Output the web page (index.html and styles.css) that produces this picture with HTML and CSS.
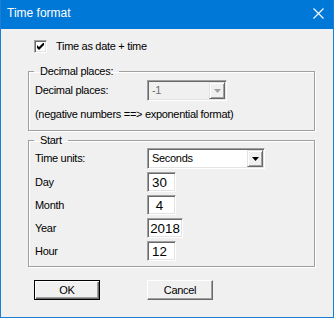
FILE: index.html
```html
<!DOCTYPE html>
<html lang="en">
<head>
    <meta charset="UTF-8">
    <title>Time format</title>
    <link rel="stylesheet" href="styles.css">
</head>
<body>

    <div class="window">
        <div class="titlebar">
            <span class="title">Time format</span>
            <svg class="close" width="11" height="11" viewBox="0 0 11 11">
                <path d="M0.5 0.5 L10.5 10.5 M10.5 0.5 L0.5 10.5" stroke="#fff" stroke-width="1.1" fill="none"/>
            </svg>
        </div>

        <div class="content">
            <label class="check-row">
                <span class="checkbox">
                    <svg width="7" height="7" viewBox="0 0 7 7">
                        <path d="M0 2 L2 4 L6 0 L7 0 L7 2 L2 7 L0 5 Z" fill="#000"/>
                    </svg>
                </span>
                Time as date + time
            </label>

            <fieldset class="group decimals">
                <legend>Decimal places:</legend>
                <div class="row">
                    <span class="label">Decimal places:</span>
                    <div class="combo combo-small disabled">
                        <span class="combo-text">-1</span>
                        <span class="drop">
                            <svg width="7" height="4" viewBox="0 0 7 4"><path d="M0 0 H7 L3.5 4 Z"/></svg>
                        </span>
                    </div>
                </div>
                <div class="note">(negative numbers ==&gt; exponential format)</div>
            </fieldset>

            <fieldset class="group start">
                <legend>Start</legend>
                <div class="form-grid">
                    <span class="label">Time units:</span>
                    <div class="combo combo-wide">
                        <span class="combo-text">Seconds</span>
                        <span class="drop">
                            <svg width="7" height="4" viewBox="0 0 7 4"><path d="M0 0 H7 L3.5 4 Z"/></svg>
                        </span>
                    </div>

                    <span class="label">Day</span>
                    <input class="field" type="text" value="30">

                    <span class="label">Month</span>
                    <input class="field" type="text" value="4">

                    <span class="label">Year</span>
                    <input class="field field-wide" type="text" value="2018">

                    <span class="label">Hour</span>
                    <input class="field" type="text" value="12">
                </div>
            </fieldset>

            <div class="buttons">
                <button class="btn default">OK</button>
                <button class="btn">Cancel</button>
            </div>
        </div>
    </div>

</body>
</html>
```

FILE: styles.css
```css
* {
    box-sizing: border-box;
}

body {
    margin: 0;
    background-color: #f0f0f0;
    font-family: "Liberation Sans", Arial, sans-serif;
    font-size: 11px;
    letter-spacing: -0.3px;
    color: #000;
}

.window {
    width: 334px;
    height: 318px;
    border: 1px solid #1c7dd6;
    border-top: 0;
    background-color: #f0f0f0;
    display: flex;
    flex-direction: column;
}

.titlebar {
    height: 29px;
    background-color: #0078d7;
    display: flex;
    align-items: flex-start;
    padding: 6px 9px 0 6px;
}

.title {
    font-size: 12px;
    line-height: 14px;
    letter-spacing: 0;
    color: #fff;
}

.close {
    margin-left: auto;
    margin-top: 2px;
}

.content {
    padding: 11px 0 0 27px;
}

.check-row {
    display: flex;
    align-items: center;
    gap: 9px;
    height: 13px;
    margin-left: 6px;
    line-height: 13px;
}

.checkbox {
    width: 13px;
    height: 13px;
    border: 1px solid;
    border-color: #a0a0a0 #fff #fff #a0a0a0;
    box-shadow: inset 1px 1px #696969, inset -1px -1px #e3e3e3;
    background-color: #fff;
    display: flex;
    align-items: center;
    justify-content: center;
}

.checkbox svg {
    display: block;
}

/* group boxes */
.group {
    width: 287px;
    min-width: 0;
    margin: 0;
    border: 1px solid #a0a0a0;
    box-shadow: inset 1px 1px #fff, 1px 1px #fff;
}

.group legend {
    margin-left: -1px;
    padding: 0 6px 0 6px;
    line-height: 13px;
}

.decimals {
    margin-top: 12px;
    padding: 2px 0 9px 6px;
}

.start {
    margin-top: 3px;
    padding: 1px 0 5px 6px;
}

.row {
    display: flex;
    align-items: center;
}

.label {
    width: 112px;
    line-height: 13px;
}

.note {
    margin-top: 7px;
    line-height: 13px;
}

.form-grid {
    display: grid;
    grid-template-columns: 112px auto;
    row-gap: 3px;
    align-items: center;
    justify-items: start;
}

/* combo boxes */
.combo {
    height: 21px;
    padding: 1px;
    border: 1px solid;
    border-color: #a0a0a0 #fff #fff #a0a0a0;
    box-shadow: inset 1px 1px #696969, inset -1px -1px #e3e3e3;
    background-color: #fff;
    display: flex;
    align-items: center;
}

.combo-wide {
    width: 118px;
}

.combo-small {
    width: 80px;
}

.combo-text {
    padding-left: 3px;
    line-height: 13px;
}

.combo.disabled {
    background-color: #f0f0f0;
    color: #6d6d6d;
}

.drop {
    margin-left: auto;
    width: 16px;
    height: 17px;
    border: 1px solid;
    border-color: #e3e3e3 #696969 #696969 #e3e3e3;
    box-shadow: inset 1px 1px #fff, inset -1px -1px #a0a0a0;
    background-color: #f0f0f0;
    display: flex;
    align-items: center;
    justify-content: center;
}

.drop svg {
    display: block;
    fill: #000;
}

.disabled .drop svg {
    fill: #a0a0a0;
}

/* edit fields */
.field {
    width: 29px;
    height: 20px;
    margin: 0;
    padding: 0 4px 0 0;
    border: 1px solid;
    border-color: #a0a0a0 #fff #fff #a0a0a0;
    box-shadow: inset 1px 1px #696969, inset -1px -1px #e3e3e3;
    background-color: #fff;
    font-family: "Liberation Sans", Arial, sans-serif;
    font-size: 13.33px;
    letter-spacing: 0;
    color: #000;
    text-align: center;
    outline: none;
}

.field-wide {
    width: 36px;
    padding: 0;
}

/* buttons */
.buttons {
    display: flex;
    gap: 47px;
    margin: 13px 0 0 6px;
}

.btn {
    width: 66px;
    height: 20px;
    padding: 0;
    border: 1px solid;
    border-color: #fff #696969 #696969 #fff;
    box-shadow: inset -1px -1px #a0a0a0;
    background-color: #f0f0f0;
    font-family: "Liberation Sans", Arial, sans-serif;
    font-size: 11px;
    letter-spacing: -0.3px;
    color: #000;
}

.btn.default {
    border-color: #000;
    box-shadow: inset 1px 1px #fff, inset -1px -1px #696969, inset -2px -2px #a0a0a0;
}
```
